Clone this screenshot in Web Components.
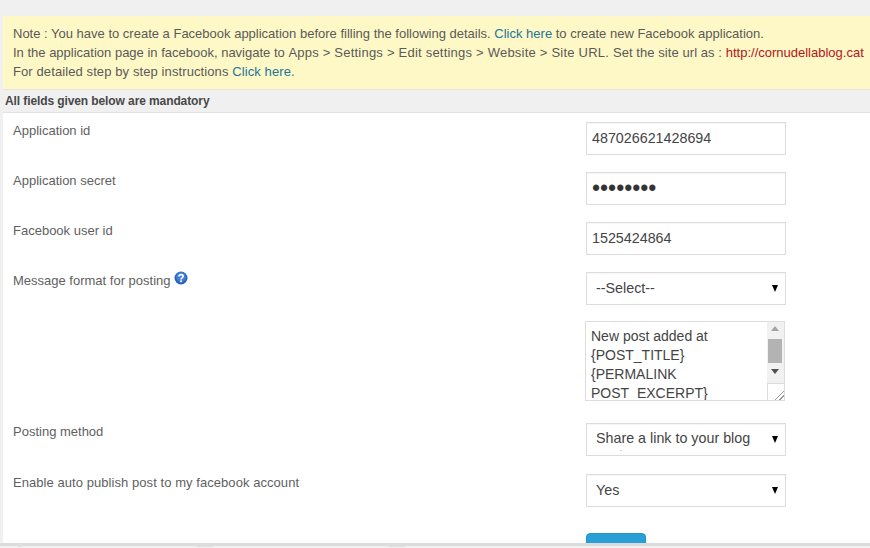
<!DOCTYPE html>
<html lang="en">
  <head>
    <meta charset="UTF-8" />
    <title>Facebook settings</title>
    <style>
      html, body { margin: 0; height: 548px; overflow: hidden; }
      body {
        background: #f0f0f1;
        color: #444;
        font: 13px/19px "Liberation Sans", Arial, sans-serif;
        display: flex;
        flex-direction: column;
      }
      a { color: #21759b; text-decoration: none; }
    </style>
  </head>
  <body>
    <fb-notice>
      Note : You have to create a Facebook application before filling the following details. <a href="#">Click here</a> to create new Facebook application.<br />
      In the application page in facebook, navigate to <span style="letter-spacing:0.22px">Apps &gt; Settings &gt; Edit settings &gt; Website &gt; Site URL. </span><span style="letter-spacing:0.07px">Set the site url as : </span><span style="color:#b5141b">http://cornudellablog.cat</span><br />
      <span style="letter-spacing:0.1px">For detailed step by step instructions <a href="#">Click here.</a></span>
    </fb-notice>
    <fb-heading>All fields given below are mandatory</fb-heading>
    <fb-panel>
      <fb-row label="Application id"><fb-field>487026621428694</fb-field></fb-row>
      <fb-row label="Application secret"><fb-field dots>••••••••</fb-field></fb-row>
      <fb-row label="Facebook user id"><fb-field>1525424864</fb-field></fb-row>
      <fb-row label="Message format for posting" help><fb-field select>--Select--</fb-field></fb-row>
      <fb-row><fb-textarea>New post added at {POST_TITLE}<br />{PERMALINK<br />POST_EXCERPT}</fb-textarea></fb-row>
      <fb-row label="Posting method"><fb-field select wrap>Share a link to your blog post</fb-field></fb-row>
      <fb-row label="Enable auto publish post to my facebook account" style="letter-spacing:0.06px"><fb-field select>Yes</fb-field></fb-row>
      <fb-row><fb-button>Save</fb-button></fb-row>
    </fb-panel>
    <fb-bottom></fb-bottom>

    <script>
      // small helper, every element is the same: a style plus some markup
      function simple(name, html, setup) {
        customElements.define(name, class extends HTMLElement {
          constructor() {
            super();
            this.attachShadow({ mode: "open" });
            this.shadowRoot.innerHTML = html;
          }
          connectedCallback() {
            if (setup) setup(this);
          }
        });
      }

      simple("fb-notice", `
        <style>
          :host {
            display: block;
            flex: none;
            margin: 16px 0 0 3px;
            padding: 8px 0 8px 10px;
            height: 57px;
            background: #fef8c6;
            border-bottom: 1px solid #e6e6dc;
            color: #5a5a5a;
            white-space: nowrap;
            overflow: hidden;
          }
        </style>
        <slot></slot>`);

      simple("fb-heading", `
        <style>
          :host {
            display: block;
            flex: none;
            height: 22px;
            padding-left: 5px;
            font-size: 12px;
            font-weight: bold;
            letter-spacing: -0.1px;
            line-height: 23px;
            color: #484848;
          }
        </style>
        <slot></slot>`);

      simple("fb-panel", `
        <style>
          :host {
            display: flex;
            flex-direction: column;
            flex: 1;
            min-height: 0;
            overflow: hidden;
            margin-left: 3px;
            padding: 9px 0 0 10px;
            background: #fff;
            border-top: 1px solid #e2e2e2;
          }
        </style>
        <slot></slot>`);

      simple("fb-row", `
        <style>
          :host {
            display: grid;
            grid-template-columns: 573px 1fr;
            flex: none;
            color: #5f5f5f;
          }
          .label { display: flex; align-items: flex-start; gap: 4px; }
          #text { margin-top: -1px; }
          svg { margin-top: -1px; margin-left: -1px; }
        </style>
        <div class="label"><span id="text"></span></div>
        <div><slot></slot></div>`,
        (el) => {
          const s = el.shadowRoot;
          s.getElementById("text").textContent = el.getAttribute("label") || "";
          if (el.hasAttribute("help") && !s.querySelector("svg")) {
            s.querySelector(".label").insertAdjacentHTML("beforeend",
              `<svg width="14" height="14" viewBox="0 0 14 14">
                <circle cx="7" cy="7" r="6.5" fill="#2a62b8"/>
                <circle cx="7" cy="6" r="5" fill="#3f7fd6"/>
                <path d="M5 5.4C5 3 9.2 3 9.2 5.3C9.2 6.8 7 6.8 7 8.4" fill="none" stroke="#fff" stroke-width="1.6"/>
                <rect x="6.1" y="9.4" width="1.8" height="1.8" fill="#fff"/>
              </svg>`);
          }
        });

      simple("fb-field", `
        <style>
          :host {
            display: flex;
            align-items: center;
            box-sizing: border-box;
            width: 200px;
            height: 33px;
            margin-bottom: 17px;
            padding: 0 5px;
            background: #fff;
            border: 1px solid #ddd;
            box-shadow: inset 0 1px 1px rgba(0,0,0,.04);
            font-size: 14.3px;
            letter-spacing: 0;
            color: #444;
            white-space: nowrap;
            overflow: hidden;
          }
          :host([select]) { padding-left: 9px; justify-content: space-between; }
          :host([dots]) { font-size: 23px; color: #333; }
          :host([wrap]) { margin-bottom: 18px; }
          /* second line of the option is cut by the control, only a bit of it shows */
          :host([wrap]) .value { display: block; width: 165px; height: 21px; margin-top: 2px; line-height: 17px; white-space: normal; overflow: hidden; }
          .arrow { display: none; width: 0; height: 0; margin-right: 2px;
            border: 3.5px solid transparent; border-top: 7px solid #000; border-bottom: 0; }
          :host([select]) .arrow { display: block; }
        </style>
        <span class="value"><slot></slot></span><span class="arrow"></span>`);

      simple("fb-textarea", `
        <style>
          :host {
            display: flex;
            box-sizing: border-box;
            width: 200px;
            height: 80px;
            margin: -1px 0 22px -1px;
            background: #fff;
            border: 1px solid #ddd;
            font-size: 14px;
            line-height: 19px;
            color: #444;
            overflow: hidden;
          }
          .text { flex: 1; padding: 5px 0 0 5px; }
          .bar { position: relative; flex: none; width: 17px; background: #f1f1f1; }
          .up, .down { position: absolute; left: 4px; width: 0; height: 0; border: 4px solid transparent; }
          .up { top: 4px; border-top: 0; border-bottom: 5px solid #a3a3a3; }
          .down { top: 47px; border-bottom: 0; border-top: 5px solid #505050; }
          .thumb { position: absolute; left: 1px; top: 17px; width: 14px; height: 24px; background: #b3b3b3; }
          .grip { position: absolute; left: 0; bottom: 0; width: 16px; height: 16px; background-color: #fff; border-left: 1px solid #ddd; border-top: 1px solid #ddd;
            background-image: linear-gradient(135deg, transparent 45%, #999 45%, #999 55%, transparent 55%, transparent 70%, #999 70%, #999 80%, transparent 80%);
            background-size: 9px 9px; background-position: right bottom; background-repeat: no-repeat; }
        </style>
        <div class="text"><slot></slot></div>
        <div class="bar">
          <div class="up"></div><div class="thumb"></div><div class="down"></div><div class="grip"></div>
        </div>`);

      simple("fb-button", `
        <style>
          :host {
            display: block;
            box-sizing: border-box;
            width: 60px;
            height: 34px;
            margin-top: 9px;
            border-radius: 4px;
            background: #2a9fd6;
            border: 1px solid #2296cc;
            color: #fff;
            font-size: 14px;
            line-height: 30px;
            text-align: center;
          }
        </style>
        <slot></slot>`);

      simple("fb-bottom", `
        <style>
          :host {
            display: flex;
            flex: none;
            height: 5px;
            box-sizing: border-box;
            border-top: 3px solid #dcdcdc;
            background: #f0f0f0;
          }
          i { flex: none; height: 1px; background: #e0e0e0; }
        </style>
        <i style="margin-left:18px;width:3px"></i>
        <i style="margin-left:176px;width:16px"></i>
        <i style="margin-left:176px;width:16px"></i>`);
    </script>
  </body>
</html>
